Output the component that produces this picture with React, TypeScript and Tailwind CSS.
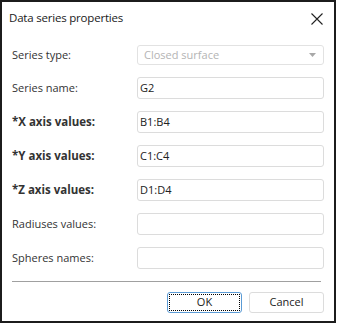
import React from 'react';

interface Field {
  label: string;
  value: string;
  bold?: boolean;
}

const fields: Field[] = [
  { label: 'Series name:', value: 'G2' },
  { label: '*X axis values:', value: 'B1:B4', bold: true },
  { label: '*Y axis values:', value: 'C1:C4', bold: true },
  { label: '*Z axis values:', value: 'D1:D4', bold: true },
  { label: 'Radiuses values:', value: '' },
  { label: 'Spheres names:', value: '' },
];

const font = { fontFamily: '"Open Sans", "Noto Sans", sans-serif' };

const App: React.FC = () => {
  return (
    <div className="w-[339px] h-[327px] bg-white" style={font}>
      <div className="w-[336px] h-[323px] border-2 border-[#1c1c1c] flex flex-col">
        <div className="h-[32px] flex items-center justify-between pl-[7px] pr-[11px]">
          <span className="text-[11.5px] tracking-[-0.2px] text-[#1a1a1a]">Data series properties</span>
          <svg width="12" height="12" viewBox="0 0 12 12" className="mt-[1px]">
            <path d="M0.5 0.5 L11.5 11.5 M11.5 0.5 L0.5 11.5" stroke="#222" strokeWidth="1.1" />
          </svg>
        </div>

        <div className="flex flex-col gap-[12px] pt-[11px] pl-[10px] pr-[10px]">
          <div className="flex items-center h-[20px]">
            <span className="w-[125px] text-[11px] text-[#333]">Series type:</span>
            <div className="flex-1 h-[20px] border border-[#e2e2e2] rounded-[3px] flex items-center justify-between pl-[6px] pr-[7px]">
              <span className="text-[11px] text-[#b4b4b4]">Closed surface</span>
              <svg width="7" height="4" viewBox="0 0 7 4">
                <path d="M0 0 L7 0 L3.5 4 Z" fill="#a8a8a8" />
              </svg>
            </div>
          </div>
          {fields.map((f) => (
            <div key={f.label} className="flex items-center h-[22px]">
              <span className={`w-[125px] text-[#333] ${f.bold ? 'text-[11.5px] font-bold' : 'text-[11px]'}`}>{f.label}</span>
              <div className="flex-1 h-[22px] border border-[#dcdcdc] rounded-[3px] flex items-center pl-[2px]">
                <span className="text-[11px] text-[#222]">{f.value}</span>
              </div>
            </div>
          ))}
        </div>

        <div className="mt-[12px] ml-[10px] mr-[13px] h-px bg-[#a0a0a0]" />

        <div className="mt-[10px] flex justify-end gap-[7px] pr-[10px]">
          <button className="w-[75px] h-[21px] border border-[#5b9bd5] rounded-[3px] bg-white p-[1px]">
            <div className="w-full h-full border border-dotted border-black flex items-center justify-center text-[11px] text-[#222]">
              OK
            </div>
          </button>
          <button className="w-[75px] h-[21px] border border-[#dcdcdc] rounded-[3px] bg-white flex items-center justify-center text-[11px] text-[#222]">
            Cancel
          </button>
        </div>
      </div>
    </div>
  );
};

export default App;
